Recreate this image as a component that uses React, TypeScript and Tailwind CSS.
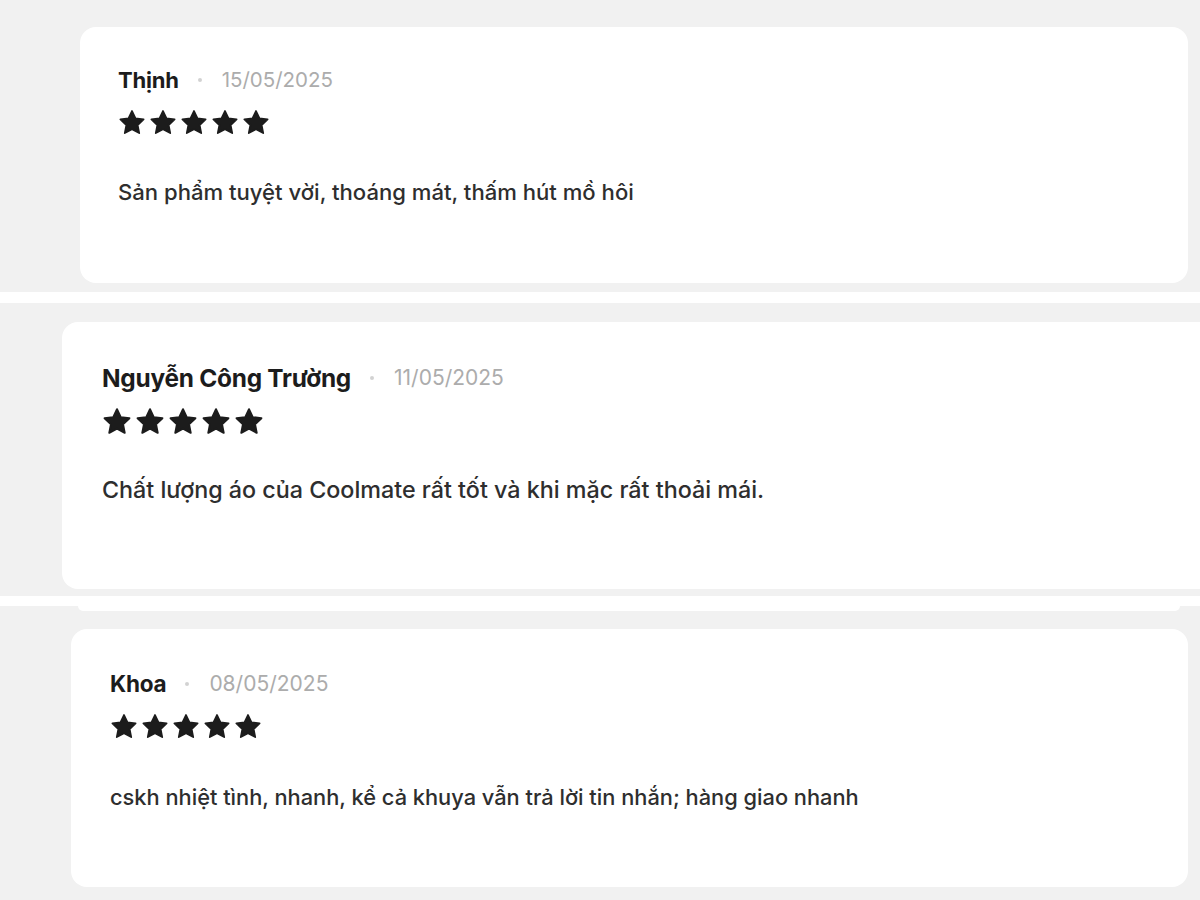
import React from "react";

type Review = {
  name: string;
  date: string;
  text: string;
  nameCls: string;
  dateCls: string;
  textCls: string;
  starCls: string;
};

const reviews: Review[] = [
  {
    name: "Thịnh",
    date: "15/05/2025",
    text: "Sản phẩm tuyệt vời, thoáng mát, thấm hút mồ hôi",
    nameCls: "text-[22px]",
    dateCls: "text-[20.5px]",
    textCls: "text-[22.1px]",
    starCls: "w-[28px] h-[27px]",
  },
  {
    name: "Nguyễn Công Trường",
    date: "11/05/2025",
    text: "Chất lượng áo của Coolmate rất tốt và khi mặc rất thoải mái.",
    nameCls: "text-[24.4px]",
    dateCls: "text-[21px]",
    textCls: "text-[23.3px]",
    starCls: "w-[30px] h-[29px]",
  },
  {
    name: "Khoa",
    date: "08/05/2025",
    text: "cskh nhiệt tình, nhanh, kể cả khuya vẫn trả lời tin nhắn; hàng giao nhanh",
    nameCls: "text-[22.5px]",
    dateCls: "text-[21px]",
    textCls: "text-[21.8px]",
    starCls: "w-[28px] h-[27px]",
  },
];

function Star({ className }: { className: string }) {
  return (
    <svg viewBox="0 0 24 24" className={`shrink-0 ${className}`}>
      <path
        d="M12 1.8l3.1 6.6 7.2.9-5.3 5 1.4 7.1L12 17.9l-6.4 3.5 1.4-7.1-5.3-5 7.2-.9z"
        fill="#1c1c1c"
        stroke="#1c1c1c"
        strokeWidth="1.6"
        strokeLinejoin="round"
      />
    </svg>
  );
}

function ReviewBody({ review, starsGap, textGap }: { review: Review; starsGap: string; textGap: string }) {
  return (
    <>
      <div className="flex items-center h-[28px]">
        <span className={`${review.nameCls} font-bold text-[#1c1c1c] tracking-[-0.01em]`}>{review.name}</span>
        <span className="w-[4px] h-[4px] rounded-full bg-[#d2d2d2] ml-[19px] mr-[20px]"></span>
        <span className={`${review.dateCls} text-[#acacac]`}>{review.date}</span>
      </div>
      <div className={`flex gap-[3px] ${starsGap}`}>
        {[0, 1, 2, 3, 4].map((i) => (
          <Star key={i} className={review.starCls} />
        ))}
      </div>
      <p className={`${review.textCls} font-medium leading-[28px] text-[#2e2e2e] ${textGap}`}>{review.text}</p>
    </>
  );
}

export default function App() {
  return (
    <div
      className="w-[1200px] h-[900px] bg-white flex flex-col overflow-hidden"
      style={{ fontFamily: "Inter, 'Noto Sans', sans-serif" }}
    >
      {/* strip 1 */}
      <div className="h-[292px] shrink-0 bg-[#f1f1f1] pt-[27px] pl-[80px] pr-[12px]">
        <div className="h-[256px] bg-white rounded-[16px] pl-[38px] pt-[39px]">
          <ReviewBody review={reviews[0]} starsGap="mt-[15px]" textGap="mt-[42px]" />
        </div>
      </div>

      <div className="h-[11px] shrink-0 bg-white"></div>

      {/* strip 2 */}
      <div className="h-[293px] shrink-0 bg-[#f1f1f1] pt-[19px] pl-[62px]">
        <div className="h-[267px] bg-white rounded-l-[16px] pl-[40px] pt-[42px]">
          <ReviewBody review={reviews[1]} starsGap="mt-[15px]" textGap="mt-[40px]" />
        </div>
      </div>

      {/* strip 3 */}
      <div className="flex-1 bg-[#f1f1f1] flex flex-col">
        <div className="h-[10px] bg-white"></div>
        <div className="h-[5px] mx-[78px] mr-[20px] bg-white rounded-b-[8px]"></div>
        <div className="pt-[18px] pl-[71px] pr-[12px]">
          <div className="h-[258px] bg-white rounded-[16px] pl-[39px] pt-[41px]">
            <ReviewBody review={reviews[2]} starsGap="mt-[15px]" textGap="mt-[43px]" />
          </div>
        </div>
      </div>
    </div>
  );
}
